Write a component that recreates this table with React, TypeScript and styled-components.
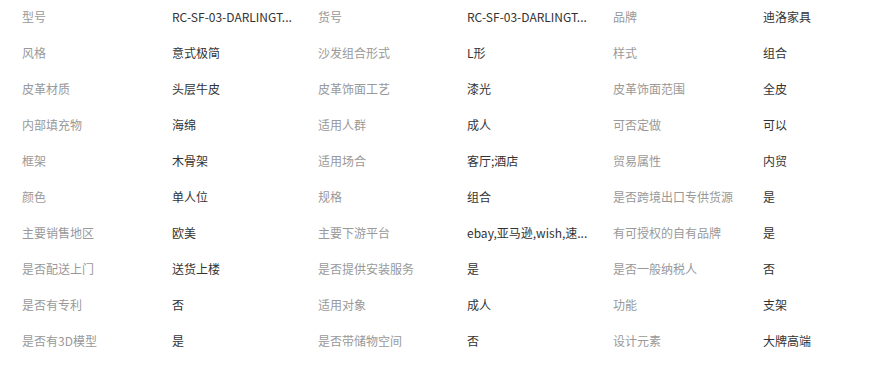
import React from 'react';
import styled, { createGlobalStyle } from 'styled-components';

const GlobalStyle = createGlobalStyle`
  html, body {
    margin: 0;
    padding: 0;
    background: #fff;
  }
  body {
    font-family: "Microsoft YaHei", "Noto Sans CJK SC", "Noto Sans", sans-serif;
    font-size: 12px;
  }
`;

const Table = styled.div`
  display: flex;
  flex-direction: column;
  width: 879px;
`;

const Row = styled.div`
  display: grid;
  grid-template-columns: 150px 146px 149px 146px 150px 1fr;
  align-items: start;
  height: 36px;
  box-sizing: border-box;
  padding: 9px 0 0 22px;
  line-height: 16px;
`;

const Label = styled.span`
  color: #999;
  white-space: nowrap;
`;

const Value = styled.span`
  color: #333;
  white-space: nowrap;
`;

type Pair = [string, string];

// values cut short the same way the source page does
const rows: Pair[][] = [
  [['型号', 'RC-SF-03-DARLINGT...'], ['货号', 'RC-SF-03-DARLINGT...'], ['品牌', '迪洛家具']],
  [['风格', '意式极简'], ['沙发组合形式', 'L形'], ['样式', '组合']],
  [['皮革材质', '头层牛皮'], ['皮革饰面工艺', '漆光'], ['皮革饰面范围', '全皮']],
  [['内部填充物', '海绵'], ['适用人群', '成人'], ['可否定做', '可以']],
  [['框架', '木骨架'], ['适用场合', '客厅;酒店'], ['贸易属性', '内贸']],
  [['颜色', '单人位'], ['规格', '组合'], ['是否跨境出口专供货源', '是']],
  [['主要销售地区', '欧美'], ['主要下游平台', 'ebay,亚马逊,wish,速...'], ['有可授权的自有品牌', '是']],
  [['是否配送上门', '送货上楼'], ['是否提供安装服务', '是'], ['是否一般纳税人', '否']],
  [['是否有专利', '否'], ['适用对象', '成人'], ['功能', '支架']],
  [['是否有3D模型', '是'], ['是否带储物空间', '否'], ['设计元素', '大牌高端']],
];

function App() {
  return (
    <>
      <GlobalStyle />
      <Table>
        {rows.map((row, i) => (
          <Row key={i}>
            {row.map(([label, value]) => (
              <React.Fragment key={label}>
                <Label>{label}</Label>
                <Value>{value}</Value>
              </React.Fragment>
            ))}
          </Row>
        ))}
      </Table>
    </>
  );
}

export default App;
